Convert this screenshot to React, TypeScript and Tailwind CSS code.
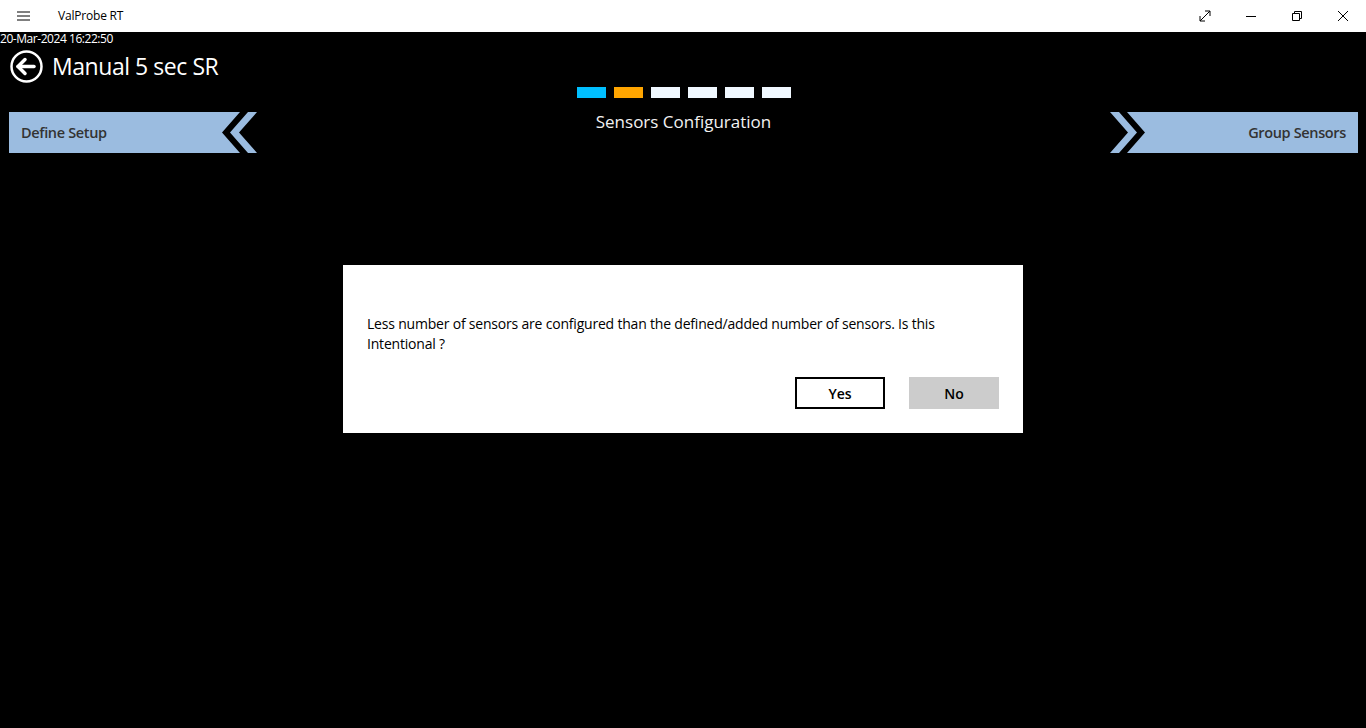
import React from "react";

const steps = ["#00bfff", "#ffa500", "#f0f8ff", "#f0f8ff", "#f0f8ff", "#f0f8ff"];

function NavBar({ label, side }: { label: string; side: "left" | "right" }) {
  const flip = side === "right";
  return (
    <div className="relative h-[41px] w-[248px]">
      <svg
        width="248"
        height="41"
        viewBox="0 0 248 41"
        className={flip ? "absolute inset-0 -scale-x-100" : "absolute inset-0"}
      >
        <polygon points="0,0 231,0 213,20.5 231,41 0,41" fill="#9bbce0" />
        <polygon points="239,0 248,0 230,20.5 248,41 239,41 221,20.5" fill="#9bbce0" />
      </svg>
      <span
        className={
          "relative flex h-full items-center text-[14.5px] font-semibold tracking-[-0.35px] text-[#333] " +
          (flip ? "justify-end pr-[12px]" : "pl-[12px]")
        }
      >
        {label}
      </span>
    </div>
  );
}

function TitleBar() {
  return (
    <div className="flex h-8 items-center bg-white text-black">
      <svg width="13" height="10" viewBox="0 0 13 10" className="ml-[17px]">
        <path d="M0 1h13M0 5h13M0 9h13" stroke="#000" strokeWidth="1" />
      </svg>
      <span className="ml-[28px] text-[12px] tracking-[-0.2px]">ValProbe RT</span>
      <div className="ml-auto flex h-full items-center">
        <div className="flex h-full w-[46px] items-center justify-center">
          <svg width="12" height="12" viewBox="0 0 12 12">
            <path d="M1 11L11 1M6 1h5v5M1 6v5h5" stroke="#000" strokeWidth="1" fill="none" />
          </svg>
        </div>
        <div className="flex h-full w-[46px] items-center justify-center">
          <svg width="10" height="10" viewBox="0 0 10 10">
            <path d="M0 5.5h10" stroke="#000" strokeWidth="1" />
          </svg>
        </div>
        <div className="flex h-full w-[46px] items-center justify-center">
          <svg width="10" height="10" viewBox="0 0 10 10">
            <path d="M0.5 2.5h7v7h-7zM2.5 2.5v-2h7v7h-2" stroke="#000" strokeWidth="1" fill="none" />
          </svg>
        </div>
        <div className="flex h-full w-[46px] items-center justify-center">
          <svg width="10" height="10" viewBox="0 0 10 10">
            <path d="M0 0L10 10M10 0L0 10" stroke="#000" strokeWidth="1" />
          </svg>
        </div>
      </div>
    </div>
  );
}

export default function App() {
  return (
    <div
      className="flex h-[728px] w-[1366px] flex-col overflow-hidden bg-black text-white"
      style={{ fontFamily: '"Open Sans", "Noto Sans", sans-serif' }}
    >
      <TitleBar />
      <div className="relative flex-1">
        <div className="h-[16px] text-[12px] leading-[14px] tracking-[-0.45px]">20-Mar-2024 16:22:50</div>
        <div className="flex h-[36px] items-center pl-[10px]">
          <svg width="33" height="33" viewBox="0 0 33 33">
            <circle cx="16.5" cy="16.5" r="15" stroke="#fff" strokeWidth="2.5" fill="none" />
            <path d="M8 16.5h16" stroke="#fff" strokeWidth="3.5" strokeLinecap="round" />
            <path d="M15 9.5L8 16.5L15 23.5" stroke="#fff" strokeWidth="3.5" strokeLinecap="round" strokeLinejoin="round" fill="none" />
          </svg>
          <span className="ml-[9px] text-[23px] leading-[30px] tracking-[-0.45px]">Manual 5 sec SR</span>
        </div>
        <div className="mt-[3px] flex h-[11px] justify-center gap-[8px] pl-[2px]">
          {steps.map((c, i) => (
            <div key={i} className="h-[11px] w-[29px]" style={{ backgroundColor: c }} />
          ))}
        </div>
        <div className="mt-[14px] flex items-start justify-between px-[9px] pr-[8px]">
          <NavBar label="Define Setup" side="left" />
          <div className="-mt-[2px] text-[17px] leading-[24px] text-[#f2f2f2]">Sensors Configuration</div>
          <NavBar label="Group Sensors" side="right" />
        </div>

        <div className="absolute left-[343px] top-[233px] h-[168px] w-[680px] bg-white px-[24px] pt-[49px] text-black">
          <p className="text-[14px] leading-[20px] tracking-[-0.2px]">
            Less number of sensors are configured than the defined/added number of sensors. Is this
            <br />
            Intentional ?
          </p>
          <div className="mt-[23px] flex justify-end gap-[24px]">
            <button className="h-[32px] w-[90px] border-2 border-black bg-white text-[14px] font-semibold">
              Yes
            </button>
            <button className="h-[32px] w-[90px] bg-[#cccccc] text-[14px] font-semibold">No</button>
          </div>
        </div>
      </div>
    </div>
  );
}
